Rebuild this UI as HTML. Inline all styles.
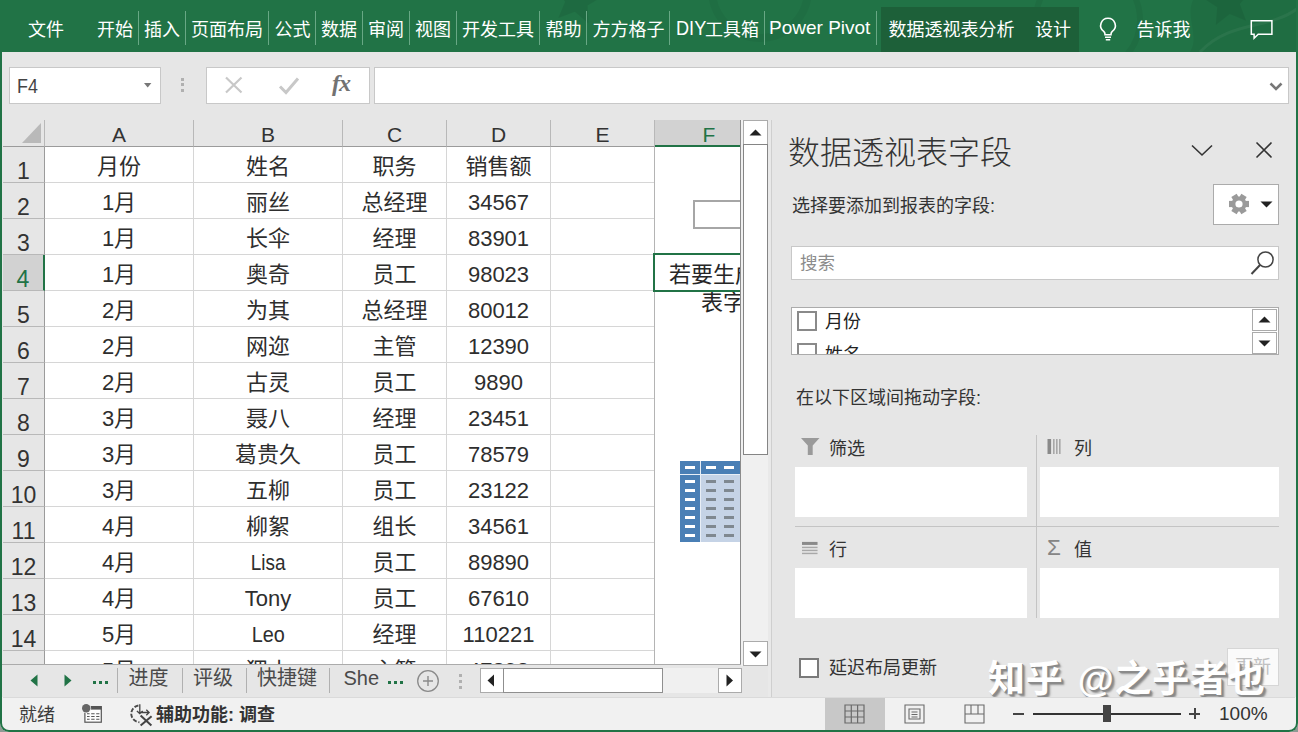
<!DOCTYPE html>
<html lang="zh-CN">
<head>
<meta charset="utf-8">
<title>Excel 数据透视表字段</title>
<style>
*{box-sizing:border-box;margin:0;padding:0}
html,body{width:1298px;height:732px;overflow:hidden;background:#e6e6e6}
body{position:relative;font-family:"Liberation Sans","Noto Sans CJK SC",sans-serif;color:#222}
#app,#app div,#app span,#app svg{position:absolute}
#app{left:0;top:0;width:1298px;height:732px;overflow:hidden;background:#e6e6e6}
#ribbon{left:0;top:0;width:1298px;height:52px;background:#217346;overflow:hidden}
#ribbon .t{top:16px;height:28px;line-height:28px;font-size:18px;color:#fff;white-space:nowrap}
#ribbon .s{top:11px;width:1px;height:34px;background:#68a885}
#ctx{left:881px;top:7px;width:198px;height:45px;background:#1d6039}
.box{background:#fff;border:1px solid #c8c8c8}
#grid{left:3px;top:120px;width:738px;height:544px;background:#fff;overflow:hidden}
.ch{top:0;height:27px;background:#e6e6e6;border-right:1px solid #b8b8b8;border-bottom:1px solid #9b9b9b;text-align:center;font-size:21px;line-height:30px;color:#333}
.rh{left:0;width:42px;height:36px;background:#e6e6e6;border-right:1px solid #9b9b9b;border-bottom:1px solid #b8b8b8;text-align:center;font-size:23px;line-height:49px;color:#333}
.c{height:36px;border-right:1px solid #d6d6d6;border-bottom:1px solid #d6d6d6;text-align:center;font-size:22px;line-height:40px;color:#2e2e2e;white-space:nowrap;overflow:hidden}
.lbl{font-size:18px;line-height:24px;height:24px;white-space:nowrap;color:#333}
.wb{background:#fff}
#tabs .tn{top:664px;font-size:20px;line-height:28px;height:28px;color:#555;white-space:nowrap}
#tabs .ts{top:668px;width:1px;height:25px;background:#b5b5b5}
#status{left:0;top:697px;width:1298px;height:35px;background:#f1f1f1}
</style>
</head>
<body>
<div id="app">
<div id="ribbon">
<svg style="left:0;top:0" width="1298" height="52" viewBox="0 0 1298 52"><path d="M1193 0C1185 18 1200 36 1190 52H1298V0z" fill="#000" fill-opacity=".05"/><polygon points="581.5,-25.6 585.6,-8.3 602.7,-3.6 587.6,5.6 588.4,23.4 574.9,11.8 558.3,18.1 565.1,1.7 554.0,-12.2 571.7,-10.8" fill="#000" fill-opacity=".07"/><polygon points="1224.4,-23.7 1233.6,-8.6 1251.4,-9.4 1239.8,4.1 1246.1,20.7 1229.7,13.9 1215.8,25.0 1217.2,7.3 1202.4,-2.5 1219.7,-6.6" fill="#000" fill-opacity=".07"/><circle cx="1088" cy="20" r="52" fill="none" stroke="#000" stroke-opacity=".05" stroke-width="6"/><circle cx="760" cy="-10" r="48" fill="none" stroke="#000" stroke-opacity=".04" stroke-width="8"/><path d="M1200 52C1230 20 1270 30 1298 8" fill="none" stroke="#fff" stroke-opacity=".05" stroke-width="3"/></svg>
<div id="ctx"></div>
<div class="t" style="left:28px">文件</div>
<div class="t" style="left:97px">开始</div>
<div class="t" style="left:144px">插入</div>
<div class="t" style="left:191px">页面布局</div>
<div class="t" style="left:274.5px">公式</div>
<div class="t" style="left:321px">数据</div>
<div class="t" style="left:368px">审阅</div>
<div class="t" style="left:415px">视图</div>
<div class="t" style="left:462px">开发工具</div>
<div class="t" style="left:545.5px">帮助</div>
<div class="t" style="left:592.5px">方方格子</div>
<div class="t" style="left:675.5px;font-size:19.5px;top:14px;transform:scaleX(.93);transform-origin:0 50%">DIY</div>
<div class="t" style="left:705px">工具箱</div>
<div class="t" style="left:769px;font-size:19px;top:14px">Power Pivot</div>
<div class="t" style="left:888.5px">数据透视表分析</div>
<div class="t" style="left:1035px">设计</div>
<div class="t" style="left:1136.5px">告诉我</div>
<div class="s" style="left:138px"></div>
<div class="s" style="left:185px"></div>
<div class="s" style="left:268px"></div>
<div class="s" style="left:315px"></div>
<div class="s" style="left:362px"></div>
<div class="s" style="left:409px"></div>
<div class="s" style="left:456px"></div>
<div class="s" style="left:539px"></div>
<div class="s" style="left:586px"></div>
<div class="s" style="left:669px"></div>
<div class="s" style="left:764px"></div>
<div class="s" style="left:876px"></div>
<svg style="left:1097px;top:15px" width="22" height="28" viewBox="0 0 22 28"><path d="M11 3.2a7.3 7.3 0 0 0-4.3 13.2c.9.8 1.3 1.6 1.3 2.8v.6h6v-.6c0-1.2.4-2 1.3-2.8A7.3 7.3 0 0 0 11 3.2z" fill="none" stroke="#fff" stroke-width="1.6"/><path d="M8 22.2h6M8.8 24.8h4.4" stroke="#fff" stroke-width="1.5" fill="none"/></svg>
<svg style="left:1249px;top:18px" width="26" height="24" viewBox="0 0 26 24"><path d="M2.3 2.8h20.6v13.4H9.2l-4.1 4.1v-4.1H2.3z" fill="none" stroke="#fff" stroke-width="1.5"/></svg>
</div>
<div class="box" style="left:9px;top:67px;width:152px;height:37px"></div>
<div style="left:17px;top:72px;font-size:20.5px;line-height:28px;color:#444;transform:scaleX(.87);transform-origin:0 0">F4</div>
<svg style="left:143.5px;top:83px" width="8" height="5" viewBox="0 0 8 5"><path d="M0 0h7.4L3.7 4.4z" fill="#777"/></svg>
<div style="left:181px;top:77.5px;width:3px;height:3px;background:#b0b0b0"></div>
<div style="left:181px;top:83.3px;width:3px;height:3px;background:#b0b0b0"></div>
<div style="left:181px;top:89px;width:3px;height:3px;background:#b0b0b0"></div>
<div class="box" style="left:206px;top:67px;width:164px;height:37px"></div>
<svg style="left:224px;top:76px" width="20" height="18" viewBox="0 0 20 18"><path d="M2 1.5L17.5 16.5M17.5 1.5L2 16.5" stroke="#c8c8c8" stroke-width="2.2" fill="none"/></svg>
<svg style="left:278px;top:76px" width="22" height="19" viewBox="0 0 22 19"><path d="M2 10.5L8 16.5L20 2.5" stroke="#c8c8c8" stroke-width="3" fill="none"/></svg>
<div style="left:332px;top:68px;font-family:'Liberation Serif',serif;font-style:italic;font-weight:bold;font-size:24px;line-height:30px;color:#727272;letter-spacing:-1px">fx</div>
<div class="box" style="left:374px;top:67px;width:915px;height:37px"></div>
<svg style="left:1269px;top:82px" width="14" height="10" viewBox="0 0 14 10"><path d="M1.5 1.5L7 7L12.5 1.5" stroke="#777" stroke-width="2.6" fill="none"/></svg>
<div id="grid">
<div class="ch" style="left:0;width:42px"></div>
<svg style="left:19px;top:3px" width="20" height="21" viewBox="0 0 20 21"><path d="M19 0V20H0z" fill="#b9b9b9"/></svg>
<div class="ch" style="left:42px;width:149px">A</div>
<div class="ch" style="left:191px;width:149px">B</div>
<div class="ch" style="left:340px;width:104px">C</div>
<div class="ch" style="left:444px;width:104px">D</div>
<div class="ch" style="left:548px;width:104px">E</div>
<div class="ch" style="left:652px;width:86px;background:#d2d2d2;color:#217346;border-bottom:2px solid #217346;border-right:0;overflow:hidden"><span style="left:0;top:0;width:108px;text-align:center">F</span></div>
<div class="rh" style="top:27px">1</div>
<div class="c" style="left:42px;top:27px;width:149px">月份</div>
<div class="c" style="left:191px;top:27px;width:149px">姓名</div>
<div class="c" style="left:340px;top:27px;width:104px">职务</div>
<div class="c" style="left:444px;top:27px;width:104px">销售额</div>
<div class="c" style="left:548px;top:27px;width:104px"></div>
<div class="rh" style="top:63px">2</div>
<div class="c" style="left:42px;top:63px;width:149px">1月</div>
<div class="c" style="left:191px;top:63px;width:149px">丽丝</div>
<div class="c" style="left:340px;top:63px;width:104px">总经理</div>
<div class="c" style="left:444px;top:63px;width:104px">34567</div>
<div class="c" style="left:548px;top:63px;width:104px"></div>
<div class="rh" style="top:99px">3</div>
<div class="c" style="left:42px;top:99px;width:149px">1月</div>
<div class="c" style="left:191px;top:99px;width:149px">长伞</div>
<div class="c" style="left:340px;top:99px;width:104px">经理</div>
<div class="c" style="left:444px;top:99px;width:104px">83901</div>
<div class="c" style="left:548px;top:99px;width:104px"></div>
<div class="rh" style="top:135px;background:#d2d2d2;color:#217346;border-right:2px solid #217346">4</div>
<div class="c" style="left:42px;top:135px;width:149px">1月</div>
<div class="c" style="left:191px;top:135px;width:149px">奥奇</div>
<div class="c" style="left:340px;top:135px;width:104px">员工</div>
<div class="c" style="left:444px;top:135px;width:104px">98023</div>
<div class="c" style="left:548px;top:135px;width:104px"></div>
<div class="rh" style="top:171px">5</div>
<div class="c" style="left:42px;top:171px;width:149px">2月</div>
<div class="c" style="left:191px;top:171px;width:149px">为其</div>
<div class="c" style="left:340px;top:171px;width:104px">总经理</div>
<div class="c" style="left:444px;top:171px;width:104px">80012</div>
<div class="c" style="left:548px;top:171px;width:104px"></div>
<div class="rh" style="top:207px">6</div>
<div class="c" style="left:42px;top:207px;width:149px">2月</div>
<div class="c" style="left:191px;top:207px;width:149px">网迩</div>
<div class="c" style="left:340px;top:207px;width:104px">主管</div>
<div class="c" style="left:444px;top:207px;width:104px">12390</div>
<div class="c" style="left:548px;top:207px;width:104px"></div>
<div class="rh" style="top:243px">7</div>
<div class="c" style="left:42px;top:243px;width:149px">2月</div>
<div class="c" style="left:191px;top:243px;width:149px">古灵</div>
<div class="c" style="left:340px;top:243px;width:104px">员工</div>
<div class="c" style="left:444px;top:243px;width:104px">9890</div>
<div class="c" style="left:548px;top:243px;width:104px"></div>
<div class="rh" style="top:279px">8</div>
<div class="c" style="left:42px;top:279px;width:149px">3月</div>
<div class="c" style="left:191px;top:279px;width:149px">聂八</div>
<div class="c" style="left:340px;top:279px;width:104px">经理</div>
<div class="c" style="left:444px;top:279px;width:104px">23451</div>
<div class="c" style="left:548px;top:279px;width:104px"></div>
<div class="rh" style="top:315px">9</div>
<div class="c" style="left:42px;top:315px;width:149px">3月</div>
<div class="c" style="left:191px;top:315px;width:149px">葛贵久</div>
<div class="c" style="left:340px;top:315px;width:104px">员工</div>
<div class="c" style="left:444px;top:315px;width:104px">78579</div>
<div class="c" style="left:548px;top:315px;width:104px"></div>
<div class="rh" style="top:351px">10</div>
<div class="c" style="left:42px;top:351px;width:149px">3月</div>
<div class="c" style="left:191px;top:351px;width:149px">五柳</div>
<div class="c" style="left:340px;top:351px;width:104px">员工</div>
<div class="c" style="left:444px;top:351px;width:104px">23122</div>
<div class="c" style="left:548px;top:351px;width:104px"></div>
<div class="rh" style="top:387px">11</div>
<div class="c" style="left:42px;top:387px;width:149px">4月</div>
<div class="c" style="left:191px;top:387px;width:149px">柳絮</div>
<div class="c" style="left:340px;top:387px;width:104px">组长</div>
<div class="c" style="left:444px;top:387px;width:104px">34561</div>
<div class="c" style="left:548px;top:387px;width:104px"></div>
<div class="rh" style="top:423px">12</div>
<div class="c" style="left:42px;top:423px;width:149px">4月</div>
<div class="c" style="left:191px;top:423px;width:149px"><span style="position:static;display:inline-block;transform:scaleX(.86)">Lisa</span></div>
<div class="c" style="left:340px;top:423px;width:104px">员工</div>
<div class="c" style="left:444px;top:423px;width:104px">89890</div>
<div class="c" style="left:548px;top:423px;width:104px"></div>
<div class="rh" style="top:459px">13</div>
<div class="c" style="left:42px;top:459px;width:149px">4月</div>
<div class="c" style="left:191px;top:459px;width:149px">Tony</div>
<div class="c" style="left:340px;top:459px;width:104px">员工</div>
<div class="c" style="left:444px;top:459px;width:104px">67610</div>
<div class="c" style="left:548px;top:459px;width:104px"></div>
<div class="rh" style="top:495px">14</div>
<div class="c" style="left:42px;top:495px;width:149px">5月</div>
<div class="c" style="left:191px;top:495px;width:149px"><span style="position:static;display:inline-block;transform:scaleX(.9)">Leo</span></div>
<div class="c" style="left:340px;top:495px;width:104px">经理</div>
<div class="c" style="left:444px;top:495px;width:104px">110221</div>
<div class="c" style="left:548px;top:495px;width:104px"></div>
<div class="rh" style="top:531px">15</div>
<div class="c" style="left:42px;top:531px;width:149px">5月</div>
<div class="c" style="left:191px;top:531px;width:149px">狸小</div>
<div class="c" style="left:340px;top:531px;width:104px">主管</div>
<div class="c" style="left:444px;top:531px;width:104px">47893</div>
<div class="c" style="left:548px;top:531px;width:104px"></div>
<div style="left:652px;top:27px;width:86px;height:517px;background:#fff"></div>
<div style="left:651px;top:27px;width:1px;height:517px;background:#b4b4b4"></div>
<div style="left:690px;top:80px;width:50px;height:29px;border:2px solid #a6a6a6;background:#fff"></div>
<div style="left:698px;top:169px;font-size:22px;line-height:28px;white-space:nowrap;color:#262626">表字段列</div>
<div style="left:650px;top:133px;width:92px;height:39px;border:2px solid #217346;background:#fff;overflow:hidden"><span style="left:14px;top:6px;font-size:22px;line-height:28px;white-space:nowrap;color:#262626">若要生成报</span></div>
<div style="left:677px;top:341px;width:61px;height:81px;background:#c5d3e6"></div>
<div style="left:677px;top:341px;width:61px;height:13px;background:#4a7fb5"></div>
<div style="left:677px;top:341px;width:20px;height:81px;background:#4a7fb5"></div>
<div style="left:697px;top:341px;width:1px;height:81px;background:#e8eef6"></div>
<div style="left:677px;top:354px;width:61px;height:1px;background:#e8eef6"></div>
<div style="left:682px;top:346px;width:10px;height:3px;background:#fff"></div>
<div style="left:703px;top:346px;width:10px;height:3px;background:#fff"></div>
<div style="left:721px;top:346px;width:10px;height:3px;background:#fff"></div>
<div style="left:682px;top:360px;width:10px;height:3px;background:#fff"></div>
<div style="left:703px;top:360px;width:10px;height:3px;background:#7f8890"></div>
<div style="left:721px;top:360px;width:10px;height:3px;background:#7f8890"></div>
<div style="left:682px;top:369px;width:10px;height:3px;background:#fff"></div>
<div style="left:703px;top:369px;width:10px;height:3px;background:#7f8890"></div>
<div style="left:721px;top:369px;width:10px;height:3px;background:#7f8890"></div>
<div style="left:682px;top:378px;width:10px;height:3px;background:#fff"></div>
<div style="left:703px;top:378px;width:10px;height:3px;background:#7f8890"></div>
<div style="left:721px;top:378px;width:10px;height:3px;background:#7f8890"></div>
<div style="left:682px;top:387px;width:10px;height:3px;background:#fff"></div>
<div style="left:703px;top:387px;width:10px;height:3px;background:#7f8890"></div>
<div style="left:721px;top:387px;width:10px;height:3px;background:#7f8890"></div>
<div style="left:682px;top:396px;width:10px;height:3px;background:#fff"></div>
<div style="left:703px;top:396px;width:10px;height:3px;background:#7f8890"></div>
<div style="left:721px;top:396px;width:10px;height:3px;background:#7f8890"></div>
<div style="left:682px;top:405px;width:10px;height:3px;background:#fff"></div>
<div style="left:703px;top:405px;width:10px;height:3px;background:#7f8890"></div>
<div style="left:721px;top:405px;width:10px;height:3px;background:#7f8890"></div>
<div style="left:682px;top:414px;width:10px;height:3px;background:#fff"></div>
<div style="left:703px;top:414px;width:10px;height:3px;background:#7f8890"></div>
<div style="left:721px;top:414px;width:10px;height:3px;background:#7f8890"></div>
<div style="left:737px;top:0;width:1px;height:544px;background:#8c8c8c"></div>
</div>
<div style="left:741px;top:120px;width:27px;height:546px;background:#f0f0f0"></div>
<div style="left:768px;top:120px;width:3px;height:577px;background:#e9e9e9"></div>
<div style="left:771px;top:120px;width:1px;height:577px;background:#cfcfcf"></div>
<div class="box" style="left:743px;top:120px;width:25px;height:25px;border-color:#ababab"></div>
<svg style="left:749px;top:129px" width="13" height="7" viewBox="0 0 13 7"><path d="M0.5 6.5L6.5 0.5L12.5 6.5z" fill="#222"/></svg>
<div class="box" style="left:743px;top:144px;width:25px;height:311px;border-color:#858585"></div>
<div class="box" style="left:743px;top:641px;width:25px;height:25px;border-color:#ababab"></div>
<svg style="left:749px;top:651px" width="13" height="7" viewBox="0 0 13 7"><path d="M0.5 0.5L6.5 6.5L12.5 0.5z" fill="#222"/></svg>
<div id="tabs" style="left:0;top:664px;width:741px;height:33px;background:#e6e6e6;border-top:1px solid #ababab"></div>
<div style="left:741px;top:666px;width:27px;height:31px;background:#e6e6e6"></div>
<div id="tabs2" style="left:0;top:0;width:0;height:0"></div>
<svg style="left:30px;top:674px" width="8" height="13" viewBox="0 0 8 13"><path d="M7.5 0.5V12.5L0.5 6.5z" fill="#217346"/></svg>
<svg style="left:64px;top:674px" width="8" height="13" viewBox="0 0 8 13"><path d="M0.5 0.5V12.5L7.5 6.5z" fill="#217346"/></svg>
<div style="left:93px;top:681px;width:3px;height:3px;background:#217346"></div>
<div style="left:99px;top:681px;width:3px;height:3px;background:#217346"></div>
<div style="left:105px;top:681px;width:3px;height:3px;background:#217346"></div>
<div id="tabs3" style="left:0;top:0;width:0;height:0"></div>
<div style="left:128.5px;top:664px;font-size:20px;line-height:28px;height:28px;color:#4a4a4a;white-space:nowrap">进度</div>
<div style="left:193px;top:664px;font-size:20px;line-height:28px;height:28px;color:#4a4a4a;white-space:nowrap">评级</div>
<div style="left:257px;top:664px;font-size:20px;line-height:28px;height:28px;color:#4a4a4a;white-space:nowrap">快捷键</div>
<div style="left:343.5px;top:664px;font-size:20px;line-height:28px;height:28px;color:#4a4a4a;white-space:nowrap">She</div>
<div style="left:117px;top:668px;width:1px;height:25px;background:#b0b0b0"></div>
<div style="left:181.5px;top:668px;width:1px;height:25px;background:#b0b0b0"></div>
<div style="left:245.5px;top:668px;width:1px;height:25px;background:#b0b0b0"></div>
<div style="left:329px;top:668px;width:1px;height:25px;background:#b0b0b0"></div>
<div style="left:388px;top:681px;width:3px;height:3px;background:#217346"></div>
<div style="left:394px;top:681px;width:3px;height:3px;background:#217346"></div>
<div style="left:400px;top:681px;width:3px;height:3px;background:#217346"></div>
<svg style="left:416px;top:669px" width="24" height="24" viewBox="0 0 24 24"><circle cx="12" cy="12" r="10.3" fill="none" stroke="#8a8a8a" stroke-width="1.3"/><path d="M12 7v10M7 12h10" stroke="#8a8a8a" stroke-width="1.4"/></svg>
<div style="left:459px;top:674px;width:3px;height:3px;background:#b0b0b0"></div>
<div style="left:459px;top:680px;width:3px;height:3px;background:#b0b0b0"></div>
<div style="left:459px;top:686px;width:3px;height:3px;background:#b0b0b0"></div>
<div style="left:480px;top:668px;width:262px;height:25px;background:#f0f0f0"></div>
<div class="box" style="left:480px;top:668px;width:24px;height:25px;border-color:#ababab"></div>
<svg style="left:487px;top:674px" width="8" height="13" viewBox="0 0 8 13"><path d="M7 0.5V12.5L0.5 6.5z" fill="#222"/></svg>
<div class="box" style="left:503px;top:668px;width:160px;height:25px;border-color:#8f8f8f"></div>
<div class="box" style="left:717.5px;top:668px;width:24.5px;height:25px;border-color:#ababab"></div>
<svg style="left:726px;top:674px" width="8" height="13" viewBox="0 0 8 13"><path d="M0.5 0.5V12.5L7 6.5z" fill="#222"/></svg>
<div style="left:788px;top:133px;font-size:32px;line-height:40px;font-weight:300;color:#333;white-space:nowrap;font-family:'Liberation Sans','Noto Sans CJK SC',sans-serif">数据透视表字段</div>
<svg style="left:1190px;top:143px" width="24" height="14" viewBox="0 0 24 14"><path d="M2 2.5L12 12L22 2.5" stroke="#333" stroke-width="1.6" fill="none"/></svg>
<svg style="left:1255px;top:141px" width="18" height="18" viewBox="0 0 18 18"><path d="M1.5 1.5L16.5 16.5M16.5 1.5L1.5 16.5" stroke="#333" stroke-width="1.6" fill="none"/></svg>
<div class="lbl" style="left:792px;top:194px">选择要添加到报表的字段:</div>
<div class="box" style="left:1213px;top:184px;width:66px;height:41px;border-color:#ababab"></div>
<svg style="left:1228px;top:193px" width="22" height="22" viewBox="-11 -11 22 22"><g fill="#9a9a9a"><rect x="-3.1" y="-10" width="6.2" height="6" transform="rotate(30)"/><rect x="-3.1" y="-10" width="6.2" height="6" transform="rotate(90)"/><rect x="-3.1" y="-10" width="6.2" height="6" transform="rotate(150)"/><rect x="-3.1" y="-10" width="6.2" height="6" transform="rotate(210)"/><rect x="-3.1" y="-10" width="6.2" height="6" transform="rotate(270)"/><rect x="-3.1" y="-10" width="6.2" height="6" transform="rotate(330)"/></g><circle r="5.6" fill="none" stroke="#9a9a9a" stroke-width="4"/></svg>
<svg style="left:1260px;top:201px" width="13" height="7" viewBox="0 0 13 7"><path d="M0.5 0.5H12.5L6.5 6.5z" fill="#222"/></svg>
<div class="box" style="left:791px;top:246px;width:488px;height:34px;border-color:#c8c8c8"></div>
<div style="left:800px;top:251px;font-size:17.5px;line-height:24px;color:#8c8c8c;white-space:nowrap">搜索</div>
<svg style="left:1249px;top:249px" width="28" height="28" viewBox="0 0 28 28"><circle cx="16.5" cy="10.5" r="7.6" fill="none" stroke="#444" stroke-width="1.5"/><path d="M11 16L2.5 25" stroke="#444" stroke-width="2"/></svg>
<div class="box" style="left:791px;top:307px;width:488px;height:48px;border-color:#ababab;overflow:hidden"><div style="left:5px;top:3px;width:20px;height:20px;border:2px solid #8a8a8a;background:#fff"></div><div class="lbl" style="left:33px;top:2px;color:#222">月份</div><div style="left:5px;top:35px;width:20px;height:20px;border:2px solid #8a8a8a;background:#fff"></div><div class="lbl" style="left:33px;top:34.5px;color:#222">姓名</div></div>
<div class="box" style="left:1252px;top:309px;width:25px;height:22px;border-color:#ababab"></div>
<svg style="left:1258px;top:316px" width="13" height="7" viewBox="0 0 13 7"><path d="M0.5 6.5L6.5 0.5L12.5 6.5z" fill="#222"/></svg>
<div class="box" style="left:1252px;top:332px;width:25px;height:22px;border-color:#ababab"></div>
<svg style="left:1258px;top:340px" width="13" height="7" viewBox="0 0 13 7"><path d="M0.5 0.5L6.5 6.5L12.5 0.5z" fill="#222"/></svg>
<div class="lbl" style="left:796px;top:386px">在以下区域间拖动字段:</div>
<svg style="left:801px;top:437px" width="19" height="19" viewBox="0 0 19 19"><path d="M0 1h18.5l-6.8 7.6v9.4h-4.9v-9.4z" fill="#9a9a9a"/></svg>
<div class="lbl" style="left:829px;top:437px">筛选</div>
<div class="wb" style="left:795px;top:467px;width:232px;height:50px"></div>
<div style="left:1036px;top:435px;width:1px;height:183px;background:#c4c4c4"></div>
<svg style="left:1047px;top:439px" width="15" height="16" viewBox="0 0 15 16"><rect x="0.5" y="0" width="3.6" height="15" fill="#8a8a8a"/><rect x="6" y="0" width="1.6" height="15" fill="#a8a8a8"/><rect x="9" y="0" width="1.6" height="15" fill="#a8a8a8"/><rect x="12" y="0" width="1.6" height="15" fill="#a8a8a8"/></svg>
<div class="lbl" style="left:1074px;top:437px">列</div>
<div class="wb" style="left:1040px;top:467px;width:239px;height:50px"></div>
<div style="left:795px;top:526px;width:484px;height:1px;background:#c4c4c4"></div>
<svg style="left:802px;top:540.5px" width="16" height="15"viewBox="0 0 17 15"><rect x="0" y="0.5" width="16.5" height="3.2" fill="#8a8a8a"/><rect x="0" y="5.6" width="16.5" height="1.5" fill="#a8a8a8"/><rect x="0" y="8.8" width="16.5" height="1.5" fill="#a8a8a8"/><rect x="0" y="12" width="16.5" height="1.5" fill="#a8a8a8"/></svg>
<div class="lbl" style="left:829px;top:538px">行</div>
<div class="wb" style="left:795px;top:568px;width:232px;height:50px"></div>
<div style="left:1047px;top:535px;font-size:22.5px;line-height:26px;color:#858585">Σ</div>
<div class="lbl" style="left:1074px;top:538px">值</div>
<div class="wb" style="left:1040px;top:568px;width:239px;height:50px"></div>
<div style="left:799px;top:658px;width:20px;height:20px;border:2px solid #7a7a7a;background:#fff"></div>
<div class="lbl" style="left:829px;top:656px">延迟布局更新</div>
<div style="left:1227px;top:648px;width:52px;height:38px;background:#fafafa;border:1px solid #d6d6d6"></div>
<div style="left:1235px;top:655px;font-size:18px;line-height:24px;color:#c0c0c0;white-space:nowrap">更新</div>
<div style="left:988px;top:656px;font-size:37px;line-height:48px;font-weight:700;word-spacing:3px;color:#fff;white-space:nowrap;text-shadow:1px 1px 0 #8a8a8a,2px 2px 1px #8a8a8a,3px 3px 2px rgba(120,120,120,.7);letter-spacing:0.8px">知乎 @之乎者也</div>
<div id="status"></div>
<div style="left:19px;top:703px;font-size:18px;line-height:24px;color:#3c3c3c;white-space:nowrap">就绪</div>
<svg style="left:80px;top:702px" width="24" height="24" viewBox="80 702 24 24"><rect x="84.9" y="706.6" width="16.4" height="15.6" fill="#fdfdfd" stroke="#555" stroke-width="1.2"/><rect x="84.9" y="706.2" width="16.4" height="3.4" fill="#555"/><path d="M87 713.7h2.6M91.2 713.7h3.4M96.2 713.7h3.2M87 716.5h2.6M91.2 716.5h3.4M96.2 716.5h3.2M87 719.3h2.6M91.2 719.3h3.4M96.2 719.3h3.2" stroke="#555" stroke-width="1.1"/><circle cx="86.2" cy="708.3" r="4.9" fill="#f1f1f1"/><circle cx="86.2" cy="708.3" r="4.2" fill="#666"/></svg>
<svg style="left:128px;top:700px" width="28" height="30" viewBox="128 700 28 30"><path d="M138.4 705.5A8.4 8.4 0 0 0 139.4 722.2" fill="none" stroke="#4a4a4a" stroke-width="1.9" stroke-dasharray="4.2 1.7"/><path d="M139.8 704.2v9M136.9 711l2.9 2.6l2.9-2.6M139.8 712.5h9M146.3 709.8l2.8 2.7l-2.8 2.7" fill="none" stroke="#444" stroke-width="1.3"/><path d="M140.6 715.4l10.8 10M151.6 716.2l-11 9.4" stroke="#444" stroke-width="2"/></svg>
<div style="left:156px;top:703px;font-size:18px;line-height:24px;font-weight:700;color:#333;white-space:nowrap">辅助功能: 调查</div>
<div style="left:825px;top:697px;width:60px;height:33px;background:#c8c8c8"></div>
<svg style="left:844px;top:704px" width="21" height="20" viewBox="0 0 21 20"><path d="M1 1h19v18H1zM1 7h19M1 13h19M7.3 1v18M13.6 1v18" fill="none" stroke="#6a6a6a" stroke-width="1.2"/></svg>
<svg style="left:904px;top:704px" width="21" height="20" viewBox="0 0 21 20"><path d="M1 1h19v18H1zM5 5h11v10H5zM7.5 8h6M7.5 10.5h6M7.5 13h6" fill="none" stroke="#6a6a6a" stroke-width="1.1"/></svg>
<svg style="left:964px;top:704px" width="21" height="20" viewBox="0 0 21 20"><path d="M1 1h19v18H1zM7 1v9H1M14 1v9H20M7 10h7" fill="none" stroke="#6a6a6a" stroke-width="1.1"/></svg>
<div style="left:1013px;top:713px;width:11px;height:1.5px;background:#444"></div>
<div style="left:1033px;top:712.5px;width:148px;height:2px;background:#333"></div>
<div style="left:1103px;top:705px;width:8px;height:17px;background:#444"></div>
<div style="left:1189px;top:713px;width:11px;height:1.5px;background:#444"></div>
<div style="left:1194px;top:708px;width:1.5px;height:11px;background:#444"></div>
<div style="left:1219px;top:702px;font-size:19px;line-height:24px;color:#333;white-space:nowrap">100%</div>
<div style="left:3px;top:697px;width:1292px;height:1px;background:#dadada"></div>
<div style="left:0;top:-30px;width:1298px;height:762px;border:2px solid #217346;border-top:0;border-radius:0 0 9px 9px;box-shadow:0 0 0 12px #8f9a94"></div>
</div>
</body>
</html>
